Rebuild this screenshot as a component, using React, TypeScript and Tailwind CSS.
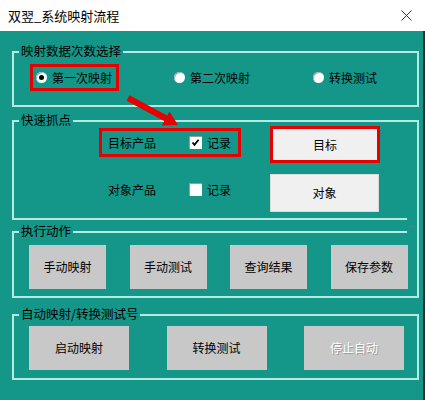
import React from "react";

const Legend = ({ children }: { children: React.ReactNode }) => (
  <span className="absolute left-[5px] -top-[10px] bg-[#149689] px-[2px] text-[12.5px] leading-[16px] text-black">
    {children}
  </span>
);

const Radio = ({ checked }: { checked?: boolean }) => (
  <span className="flex h-[11px] w-[11px] items-center justify-center rounded-full bg-white shadow-[inset_1px_1px_0_#a8a8a8]">
    {checked && <span className="h-[5px] w-[5px] rounded-full bg-black" />}
  </span>
);

const Check = ({ checked }: { checked?: boolean }) => (
  <span className="flex h-[13px] w-[13px] items-center justify-center bg-white shadow-[inset_1px_1px_0_#9a9a9a]">
    {checked && (
      <svg width="9" height="9" viewBox="0 0 9 9">
        <path d="M1.5 4.5 L3.5 6.8 L7.6 1.8" fill="none" stroke="#000" strokeWidth="1.8" />
      </svg>
    )}
  </span>
);

const GrayBtn = ({ children, w, disabled }: { children: React.ReactNode; w: string; disabled?: boolean }) => (
  <div
    className={`${w} flex h-[44px] items-center justify-center bg-[#c8c8c8] text-[12px] ${
      disabled ? "text-white [text-shadow:1px_1px_0_#9a9a9a]" : "text-black"
    }`}
  >
    {children}
  </div>
);

export default function App() {
  return (
    <div className="relative h-[400px] w-[425px] overflow-hidden bg-white font-['Noto_Sans_CJK_SC','Microsoft_YaHei',sans-serif] leading-[16px] text-black">
      {/* Title bar */}
      <div className="flex h-[31px] items-center justify-between pl-[8px] pr-[13px]">
        <span className="text-[13px]">双翌_系统映射流程</span>
        <svg width="11" height="11" viewBox="0 0 11 11">
          <path d="M0.5 0.5 L10.5 10.5 M10.5 0.5 L0.5 10.5" stroke="#333" strokeWidth="1" />
        </svg>
      </div>

      {/* Body */}
      <div className="relative flex h-[369px] flex-col border-r-2 border-[#2d2d2d] bg-[#149689] pl-[12px] pt-[20px]">
        {/* Frame 1 */}
        <div className="relative w-[407px] border-2 border-[#b2ebe4] pb-[14px] pt-[11px]">
          <Legend>映射数据次数选择</Legend>
          <div className="flex items-center">
            <div className="ml-[16px] flex h-[27px] w-[89px] items-center border-[3px] border-[#e60000] pl-[3px]">
              <Radio checked />
              <span className="ml-[5px] text-[12px]">第一次映射</span>
            </div>
            <div className="ml-[55px] flex items-center">
              <Radio />
              <span className="ml-[5px] text-[12px]">第二次映射</span>
            </div>
            <div className="ml-[63px] flex items-center">
              <Radio />
              <span className="ml-[5px] text-[12px]">转换测试</span>
            </div>
          </div>
        </div>

        {/* Frame 2 */}
        <div className="relative mt-[13px] flex w-[407px] flex-col gap-[11px] border-2 border-[#b2ebe4] pb-[6px] pt-[4px]">
          <Legend>快速抓点</Legend>
          <div className="flex items-start">
            <div className="ml-[85px] mt-[2px] flex h-[29px] w-[142px] items-center border-[3px] border-[#e60000] pl-[6px]">
              <span className="text-[12px]">目标产品</span>
              <span className="ml-[33px]">
                <Check checked />
              </span>
              <span className="ml-[5px] text-[12px]">记录</span>
            </div>
            <div className="ml-[29px] flex h-[37px] w-[110px] items-center justify-center border-[3px] border-[#e60000] bg-[#f0f0f0] text-[12px]">
              目标
            </div>
          </div>
          <div className="flex items-start">
            <div className="ml-[85px] mt-[1px] flex h-[29px] w-[142px] items-center border-[3px] border-transparent pl-[6px]">
              <span className="text-[12px]">对象产品</span>
              <span className="ml-[33px]">
                <Check />
              </span>
              <span className="ml-[5px] text-[12px]">记录</span>
            </div>
            <div className="ml-[29px] flex h-[38px] w-[109px] items-center justify-center border border-[#dadada] bg-[#f0f0f0] text-[12px]">
              对象
            </div>
          </div>
        </div>

        {/* Frame 3 */}
        <div className="relative mt-[11px] flex w-[407px] gap-[23.5px] border-2 border-[#b2ebe4] pb-[7px] pl-[15px] pt-[12px]">
          <Legend>执行动作</Legend>
          <GrayBtn w="w-[77px]">手动映射</GrayBtn>
          <GrayBtn w="w-[77px]">手动测试</GrayBtn>
          <GrayBtn w="w-[77px]">查询结果</GrayBtn>
          <GrayBtn w="w-[77px]">保存参数</GrayBtn>
        </div>

        {/* Frame 4 */}
        <div className="relative mt-[16px] flex w-[407px] gap-[37.5px] border-2 border-[#b2ebe4] pb-[8px] pl-[15px] pt-[10px]">
          <Legend>自动映射/转换测试号</Legend>
          <GrayBtn w="w-[100px]">启动映射</GrayBtn>
          <GrayBtn w="w-[100px]">转换测试</GrayBtn>
          <GrayBtn w="w-[100px]" disabled>
            停止自动
          </GrayBtn>
        </div>

        {/* >> marker over frame join */}
        <div className="absolute left-[407px] top-[186px] flex h-[17px] w-[12px] items-center border-r-2 border-[#b2ebe4] bg-[#149689] text-[8px] leading-[8px] tracking-[-1px] text-[#5d8784]">
          &gt;&gt;
        </div>

        {/* Red arrow */}
        <svg className="pointer-events-none absolute left-0 top-0" width="425" height="369" viewBox="0 31 425 369">
          <line x1="128" y1="98" x2="167" y2="119" stroke="#e60000" strokeWidth="6" />
          <polygon points="178,125 161.9,125.4 169.5,111.4" fill="#e60000" />
        </svg>
      </div>
    </div>
  );
}
